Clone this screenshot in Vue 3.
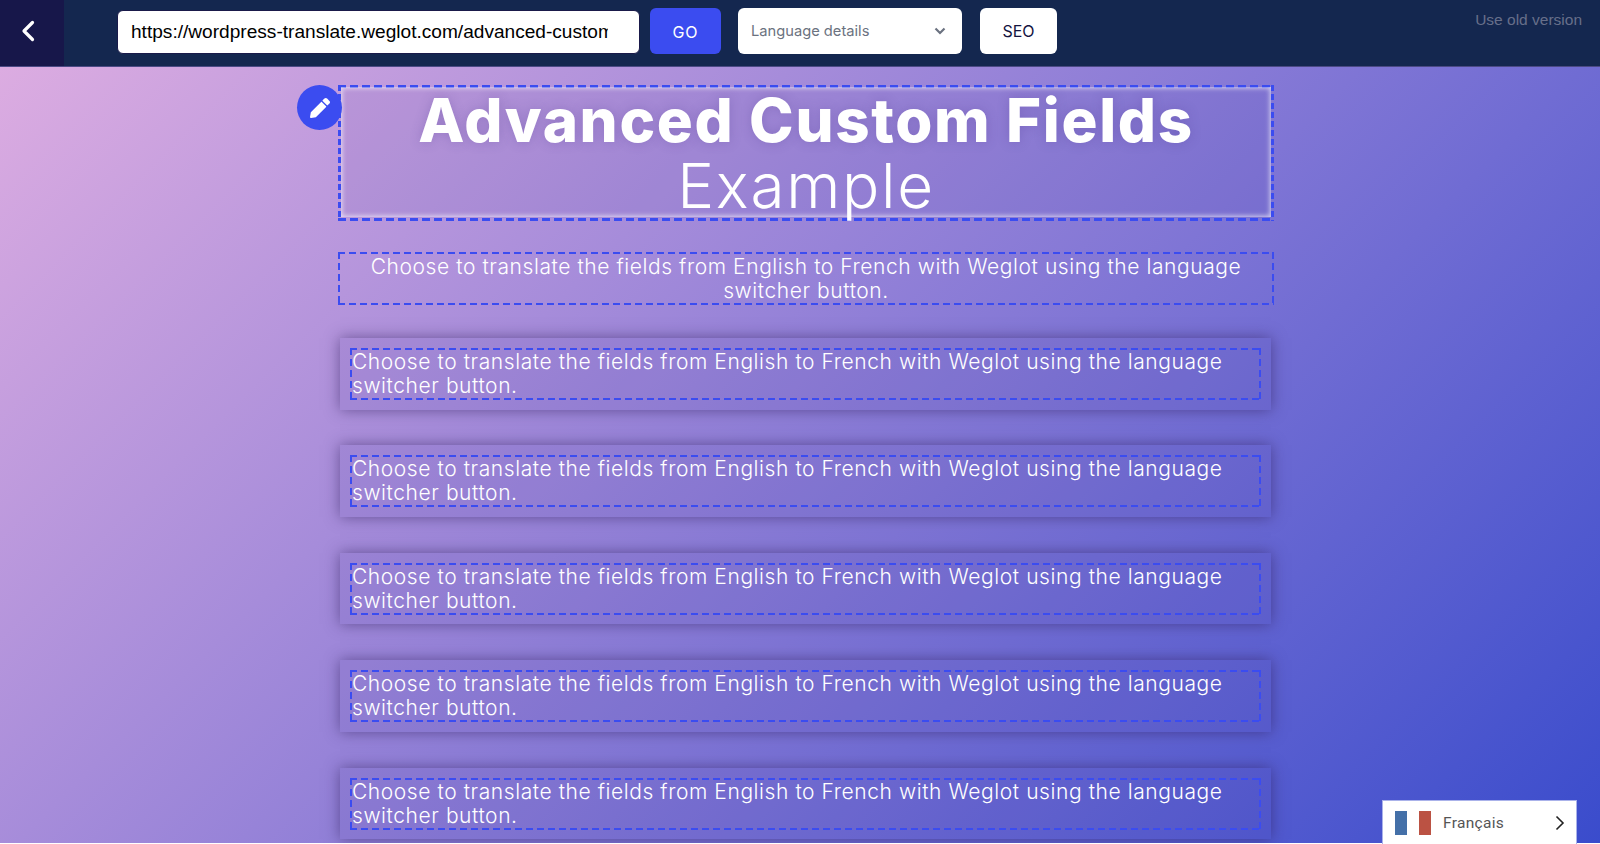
<script setup>
const cards = [1, 2, 3, 4, 5]
const line = 'Choose to translate the fields from English to French with Weglot using the language switcher button.'
</script>

<template>
  <div class="page">
    <header class="bar">
      <button class="back" aria-label="Back">
        <svg width="14" height="22" viewBox="0 0 14 22"><path d="M11.500 2.500 3 11l8.500 8.500" fill="none" stroke="#fff" stroke-width="3.200" stroke-linecap="round" stroke-linejoin="round"/></svg>
      </button>
      <input class="url" value="https://wordpress-translate.weglot.com/advanced-custom-fields-example/" />
      <button class="go">GO</button>
      <div class="select">
        <span>Language details</span>
        <svg width="12" height="8" viewBox="0 0 12 8"><path d="M1.500 1.500 6 6l4.500-4.500" fill="none" stroke="#6b7280" stroke-width="2.200"/></svg>
      </div>
      <button class="seo">SEO</button>
      <a class="old">Use old version</a>
    </header>

    <main class="content">
      <div class="title-frame dash-heavy">
        <span class="edit">
          <svg width="20" height="20" viewBox="0 0 512 512"><path fill="#fff" d="M497.900 142.100l-46.100 46.100c-4.700 4.700-12.300 4.700-17 0l-111-111c-4.700-4.700-4.700-12.300 0-17l46.100-46.100c18.700-18.700 49.100-18.700 67.900 0l60.100 60.100c18.800 18.700 18.800 49.100 0 67.900zM284.200 99.800L21.600 362.400.4 483.900c-2.900 16.400 11.400 30.600 27.800 27.800l121.500-21.300 262.600-262.600c4.700-4.700 4.700-12.300 0-17l-111-111c-4.800-4.700-12.400-4.700-17.100 0z"/></svg>
        </span>
        <div class="title-inner">
          <h1 class="title"><strong>Advanced Custom Fields</strong><span>Example</span></h1>
        </div>
      </div>

      <p class="intro dash">{{ line }}</p>

      <section v-for="c in cards" :key="c" class="card">
        <p class="card-text dash">{{ line }}</p>
      </section>
    </main>

    <div class="lang">
      <span class="flag"><i class="blue"></i><i class="red"></i></span>
      <span class="lang-name">Français</span>
      <svg width="10" height="16" viewBox="0 0 10 16"><path d="M1.500 1.500 8 8l-6.500 6.500" fill="none" stroke="#222" stroke-width="1.600"/></svg>
    </div>
  </div>
</template>

<style>
html, body { margin: 0; height: 100%; overflow: hidden; background: #fff; }
</style>

<style scoped>
.page {
  position: relative;
  height: 844px;
  overflow: hidden;
  font-family: Inter, "Liberation Sans", sans-serif;
}
.bar {
  height: 66px;
  box-sizing: content-box;
  display: flex;
  align-items: flex-start;
  background: #14274f;
  border-bottom: 1px solid #4b4a85;
  position: relative;
}
button { font-family: inherit; cursor: pointer; }
.back {
  width: 64px;
  height: 66px;
  flex: none;
  border: 0;
  background: #17174a;
  padding: 0 8px 4px 0;
  display: flex;
  align-items: center;
  justify-content: center;
  margin-right: 53px;
}
.url {
  width: 523px;
  height: 44px;
  box-sizing: border-box;
  border: 1px solid #1a1a4a;
  border-radius: 6px;
  padding: 0 31px 0 13px;
  margin-top: 10px;
  font: 19.100px "Liberation Sans", Arial, sans-serif;
  color: #000;
  background: #fff;
  outline: none;
}
.go {
  width: 71px;
  height: 46px;
  margin: 8px 0 0 10px;
  border: 0;
  border-radius: 6px;
  background: #3b4cf0;
  color: #fff;
  font-size: 16px;
  font-weight: 400;
  letter-spacing: 0.8px;
  padding-top: 2px;
}
.select {
  width: 224px;
  height: 46px;
  box-sizing: border-box;
  margin: 8px 0 0 17px;
  padding: 0 16px 0 13px;
  background: #fff;
  border-radius: 6px;
  display: flex;
  align-items: center;
  justify-content: space-between;
  color: #6b7280;
  font-size: 14.700px;
}
.seo {
  width: 77px;
  height: 46px;
  margin: 8px 0 0 18px;
  border: 0;
  border-radius: 6px;
  background: #fff;
  color: #14143f;
  font-size: 16px;
  font-weight: 400;
  padding-bottom: 1px;
}
.old {
  position: absolute;
  right: 18px;
  top: 11px;
  font: 15.500px "Liberation Sans", Arial, sans-serif;
  color: #676f8a;
}
.content {
  height: 776px;
  box-sizing: border-box;
  overflow: hidden;
  padding: 18px 0 0 338px;
  background: linear-gradient(135deg, #dcace1 0%, #3a4ccc 100%);
  color: #fff;
}
.dash {
  background-image:
    repeating-linear-gradient(90deg, #3b4cf0 0 7px, transparent 7px 11px),
    repeating-linear-gradient(90deg, #3b4cf0 0 7px, transparent 7px 11px),
    repeating-linear-gradient(180deg, #3b4cf0 0 7px, transparent 7px 11px),
    repeating-linear-gradient(180deg, #3b4cf0 0 7px, transparent 7px 11px);
  background-size: 100% 2px, 100% 2px, 2px 100%, 2px 100%;
  background-position: 0 0, 0 100%, 0 0, 100% 0;
  background-repeat: no-repeat;
}
.dash-heavy {
  background-image:
    repeating-linear-gradient(90deg, #3b4cf0 0 8px, transparent 8px 12px),
    repeating-linear-gradient(90deg, #3b4cf0 0 8px, transparent 8px 12px),
    repeating-linear-gradient(180deg, #3b4cf0 0 6px, transparent 6px 9px),
    repeating-linear-gradient(180deg, #3b4cf0 0 6px, transparent 6px 9px);
  background-size: 100% 3px, 100% 3px, 3px 100%, 3px 100%;
  background-position: 0 0, 0 100%, 0 0, 100% 0;
  background-repeat: no-repeat;
}
.title-frame {
  position: relative;
  width: 936px;
  height: 136px;
  box-sizing: border-box;
  padding: 3px;
}
.title-inner {
  height: 100%;
  background-color: rgba(80, 60, 150, 0.08);
  box-shadow: inset 0 0 5px 1px rgba(255, 255, 255, 0.7);
}
.edit {
  position: absolute;
  left: -41px;
  top: 0;
  width: 45px;
  height: 45px;
  border-radius: 50%;
  background: #3b4cf0;
  display: flex;
  align-items: center;
  justify-content: center;
}
.title {
  margin: 0;
  text-align: center;
  font-weight: 300;
  font-size: 60px;
  line-height: 66px;
}
.title strong {
  display: block;
  font-weight: 800;
  font-size: 60px;
  letter-spacing: 1.650px;
  margin-top: -1px;
  text-shadow: 0 0 12px rgba(70, 50, 140, 0.25);
}
.title span {
  display: block;
  font-weight: 300;
  font-size: 62px;
  letter-spacing: 1.700px;
}
.intro {
  margin: 31px 0 0;
  width: 936px;
  height: 53px;
  box-sizing: border-box;
  padding: 3px 14px 0;
  text-align: center;
  font-size: 21px;
  font-weight: 300;
  line-height: 24px;
  letter-spacing: 0.580px;
}
.card {
  box-sizing: border-box;
  width: 931px;
  height: 71.500px;
  margin: 33px 0 0 2px;
  padding: 10px;
  background: rgba(70, 50, 150, 0.09);
  box-shadow: 0 0 14px rgba(45, 30, 90, 0.55);
}
.card + .card { margin-top: 35.900px; }
.card-text {
  margin: 0;
  height: 52px;
  box-sizing: border-box;
  padding: 2px 30px 0 2px;
  font-size: 21px;
  font-weight: 300;
  line-height: 24px;
  letter-spacing: 0.580px;
}
.lang {
  position: absolute;
  left: 1382px;
  top: 800px;
  width: 195px;
  height: 44px;
  box-sizing: border-box;
  background: #fff;
  border: 1px solid #aab2ea;
  border-bottom: 0;
  padding: 0 11px 0 12px;
  display: flex;
  align-items: center;
  font-family: Roboto, sans-serif;
}
.flag { display: flex; gap: 12px; width: 48px; }
.flag i { display: block; width: 12px; height: 24px; }
.blue { background: #4470a8; }
.red { background: #bb5243; }
.lang-name { flex: 1; font-size: 15.500px; color: #555; letter-spacing: 0.3px; }
</style>
